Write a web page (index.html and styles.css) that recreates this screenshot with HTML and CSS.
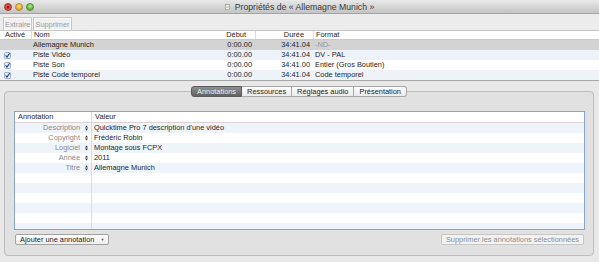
FILE: index.html
```html
<!DOCTYPE html>
<html lang="fr">
<head>
    <meta charset="UTF-8">
    <title>Propriétés de « Allemagne Munich »</title>
    <link rel="stylesheet" href="styles.css">
</head>
<body>
    <div class="window">
        <div class="titlebar">
            <div class="lights">
                <span class="light red"></span>
                <span class="light yellow"></span>
                <span class="light green"></span>
            </div>
            <div class="title">
                <svg class="doc" width="5" height="6" viewBox="0 0 5 6"><rect x="0.5" y="0.5" width="4" height="5" fill="#f4f4f4" stroke="#8c8c8c" stroke-width="0.6"/><path d="M1.3 2.3h2.4M1.3 3.4h2.4" stroke="#9a9a9a" stroke-width="0.5"/></svg>
                <span>Propriétés de « Allemagne Munich »</span>
            </div>
            <div class="lights-spacer"></div>
        </div>

        <div class="toolbar">
            <button class="tool-btn" disabled>Extraire</button>
            <button class="tool-btn" disabled>Supprimer</button>
        </div>

        <div class="tracks">
            <div class="tracks-head">
                <span class="col-on">Activé</span>
                <span class="col-name">Nom</span>
                <span class="col-num">Début</span>
                <span class="col-num sep">Durée</span>
                <span class="col-fmt">Format</span>
            </div>
            <div class="track-row sel">
                <span class="col-on"></span>
                <span class="col-name">Allemagne Munich</span>
                <span class="col-num">0:00.00</span>
                <span class="col-num">34:41.04</span>
                <span class="col-fmt muted">-ND-</span>
            </div>
            <div class="track-row alt">
                <span class="col-on"><svg class="check" width="7" height="7" viewBox="0 0 7 7"><rect x="0.5" y="0.5" width="6" height="6" rx="1" fill="#e3ebf6" stroke="#7d93b4" stroke-width="0.7"/><path d="M1.6 3.4l1.4 1.6 2.6-3.8" fill="none" stroke="#1d3f86" stroke-width="1.1"/></svg></span>
                <span class="col-name">Piste Vidéo</span>
                <span class="col-num">0:00.00</span>
                <span class="col-num">34:41.04</span>
                <span class="col-fmt">DV - PAL</span>
            </div>
            <div class="track-row">
                <span class="col-on"><svg class="check" width="7" height="7" viewBox="0 0 7 7"><rect x="0.5" y="0.5" width="6" height="6" rx="1" fill="#e3ebf6" stroke="#7d93b4" stroke-width="0.7"/><path d="M1.6 3.4l1.4 1.6 2.6-3.8" fill="none" stroke="#1d3f86" stroke-width="1.1"/></svg></span>
                <span class="col-name">Piste Son</span>
                <span class="col-num">0:00.00</span>
                <span class="col-num">34:41.00</span>
                <span class="col-fmt">Entier (Gros Boutien)</span>
            </div>
            <div class="track-row alt">
                <span class="col-on"><svg class="check" width="7" height="7" viewBox="0 0 7 7"><rect x="0.5" y="0.5" width="6" height="6" rx="1" fill="#e3ebf6" stroke="#7d93b4" stroke-width="0.7"/><path d="M1.6 3.4l1.4 1.6 2.6-3.8" fill="none" stroke="#1d3f86" stroke-width="1.1"/></svg></span>
                <span class="col-name">Piste Code temporel</span>
                <span class="col-num">0:00.00</span>
                <span class="col-num">34:41.04</span>
                <span class="col-fmt">Code temporel</span>
            </div>
        </div>

        <div class="panel">
            <div class="tabs">
                <span class="tab on">Annotations</span>
                <span class="tab">Ressources</span>
                <span class="tab">Réglages audio</span>
                <span class="tab">Présentation</span>
            </div>
            <div class="groupbox">
                <div class="annot">
                    <div class="annot-head">
                        <span class="head-key">Annotation</span>
                        <span class="head-val">Valeur</span>
                    </div>
                    <div class="annot-body">
                        <div class="annot-row">
                            <span class="key">Description <svg class="stepper" width="3" height="6" viewBox="0 0 3 6"><path d="M0 2.4L1.5 0.4 3 2.4zM0 3.6L1.5 5.6 3 3.6z" fill="#333"/></svg></span>
                            <span class="val">Quicktime Pro 7 description d'une vidéo</span>
                        </div>
                        <div class="annot-row">
                            <span class="key">Copyright <svg class="stepper" width="3" height="6" viewBox="0 0 3 6"><path d="M0 2.4L1.5 0.4 3 2.4zM0 3.6L1.5 5.6 3 3.6z" fill="#333"/></svg></span>
                            <span class="val">Frédéric Robin</span>
                        </div>
                        <div class="annot-row">
                            <span class="key">Logiciel <svg class="stepper" width="3" height="6" viewBox="0 0 3 6"><path d="M0 2.4L1.5 0.4 3 2.4zM0 3.6L1.5 5.6 3 3.6z" fill="#333"/></svg></span>
                            <span class="val">Montage sous FCPX</span>
                        </div>
                        <div class="annot-row">
                            <span class="key">Année <svg class="stepper" width="3" height="6" viewBox="0 0 3 6"><path d="M0 2.4L1.5 0.4 3 2.4zM0 3.6L1.5 5.6 3 3.6z" fill="#333"/></svg></span>
                            <span class="val">2011</span>
                        </div>
                        <div class="annot-row">
                            <span class="key">Titre <svg class="stepper" width="3" height="6" viewBox="0 0 3 6"><path d="M0 2.4L1.5 0.4 3 2.4zM0 3.6L1.5 5.6 3 3.6z" fill="#333"/></svg></span>
                            <span class="val">Allemagne Munich</span>
                        </div>
                    </div>
                </div>
                <div class="actions">
                    <button class="push-btn">Ajouter une annotation <span class="arrow">▼</span></button>
                    <button class="push-btn" disabled>Supprimer les annotations sélectionnées</button>
                </div>
            </div>
        </div>
    </div>
</body>
</html>
```

FILE: styles.css
```css
body {
    margin: 0;
    font-family: "Liberation Sans", Arial, sans-serif;
    font-size: 7.4px;
    color: #1e1e1e;
    background-color: #e8e8e8;
}
.window {
    width: 599px;
    height: 262px;
    overflow: hidden;
}
.titlebar {
    display: flex;
    align-items: center;
    height: 13px;
    background: linear-gradient(#e8e8e8, #c4c4c4);
    border-bottom: 1px solid #a4a4a4;
}
.lights {
    display: flex;
    gap: 3px;
    width: 30px;
    padding-left: 4px;
}
.lights-spacer {
    width: 34px;
}
.light {
    width: 8px;
    height: 8px;
    border-radius: 50%;
    box-sizing: border-box;
}
.light.red {
    background: radial-gradient(circle at 50% 55%, #8c1a16 0 1px, #e5534b 1.6px, #c0302a 100%);
    border: 1px solid #a8322c;
}
.light.yellow {
    background: radial-gradient(circle at 50% 35%, #ffe27a, #e0a12a 70%);
    border: 1px solid #b8862a;
}
.light.green {
    background: radial-gradient(circle at 50% 35%, #b8f08c, #5eab3c 70%);
    border: 1px solid #4d8d33;
}
.title {
    flex: 1;
    display: flex;
    justify-content: center;
    align-items: center;
    gap: 5px;
    font-size: 8.7px;
    color: #3a3a3a;
}
.toolbar {
    display: flex;
    gap: 1px;
    height: 17px;
    padding: 3px 0 0 3px;
    box-sizing: border-box;
    background-color: #ececec;
    border-bottom: 1px solid #c6c6c6;
}
.tool-btn {
    height: 14px;
    padding: 0 1px;
    font: inherit;
    color: #9b9b9b;
    background-color: #f1f1f1;
    border: 1px solid #c8c8c8;
    box-shadow: inset 0 0 0 1px #fafafa;
}
.tracks {
    background-color: #fff;
    border-bottom: 1px solid #a6a6a6;
}
.tracks-head, .track-row {
    display: grid;
    grid-template-columns: 31px 1fr 58px 58px 286px;
}
.tracks-head {
    height: 8px;
    line-height: 8px;
    border-bottom: 1px solid #c9c9c9;
}
.tracks-head .col-num {
    padding-right: 9px;
}
.tracks-head .col-name, .tracks-head .sep, .tracks-head .col-fmt {
    border-left: 1px solid #dadada;
}
.tracks-head .col-on {
    padding-left: 5px;
}
.track-row {
    height: 10px;
    line-height: 10px;
}
.track-row.sel {
    background-color: #d3d3d3;
}
.track-row.alt {
    background-color: #eef3fa;
}
.col-on {
    padding-left: 4px;
}
.col-name {
    padding-left: 2px;
}
.col-num {
    text-align: right;
    padding-right: 3px;
}
.col-fmt {
    padding-left: 2px;
}
.muted {
    color: #9a9a9a;
}
.check {
    display: block;
    margin-top: 2px;
}
.panel {
    padding: 5px 5px 0 4px;
}
.tabs {
    display: flex;
    justify-content: center;
    height: 11px;
    margin-bottom: -6px;
    position: relative;
    z-index: 1;
}
.tab {
    padding: 0 5px;
    line-height: 9px;
    border: 1px solid #a8a8a8;
    border-left: none;
    background: linear-gradient(#fdfdfd, #ebebeb);
    color: #222;
}
.tab:first-child {
    border-left: 1px solid #5c5c5c;
    border-radius: 3px 0 0 3px;
}
.tab:last-child {
    border-radius: 0 3px 3px 0;
}
.tab.on {
    background: linear-gradient(#8e8e8e, #626262);
    border-color: #5c5c5c;
    color: #ececec;
}
.groupbox {
    height: 165px;
    padding: 19px 8px 0 9px;
    box-sizing: border-box;
    border: 1px solid #bdbdbd;
    border-radius: 4px;
    background-color: #e1e1e1;
}
.annot {
    border: 1px solid #86a5c8;
    background-color: #fff;
}
.annot-head {
    display: grid;
    grid-template-columns: 76px 1fr;
    height: 10px;
    line-height: 10px;
    border-bottom: 1px solid #ddd3d3;
}
.head-key {
    padding-left: 3px;
}
.head-val {
    padding-left: 3px;
    border-left: 1px solid #dcdcdc;
}
.annot-body {
    height: 106px;
    background-image:
        linear-gradient(to right, transparent 76px, #dcdcdc 76px, #dcdcdc 77px, transparent 77px),
        repeating-linear-gradient(#eff4fb 0 10px, #fff 10px 20px);
}
.annot-row {
    display: grid;
    grid-template-columns: 76px 1fr;
    height: 10px;
    line-height: 10px;
}
.key {
    display: flex;
    justify-content: flex-end;
    align-items: center;
    gap: 5px;
    padding-right: 3px;
    color: #8a8a8a;
}
.stepper {
    display: block;
}
.val {
    padding-left: 3px;
}
.actions {
    display: flex;
    justify-content: space-between;
    margin: 4px 1px 0 1px;
}
.push-btn {
    height: 11px;
    padding: 0 4px;
    font: inherit;
    line-height: 9px;
    color: #222;
    background: linear-gradient(#ffffff, #eeeeee);
    border: 1px solid #a2a2a2;
    border-radius: 2px;
}
.push-btn:disabled {
    color: #8e8e8e;
    background: #f2f2f2;
    border-color: #c6c6c6;
}
.arrow {
    font-size: 4px;
    margin-left: 4px;
    color: #555;
    vertical-align: 1px;
}
```
